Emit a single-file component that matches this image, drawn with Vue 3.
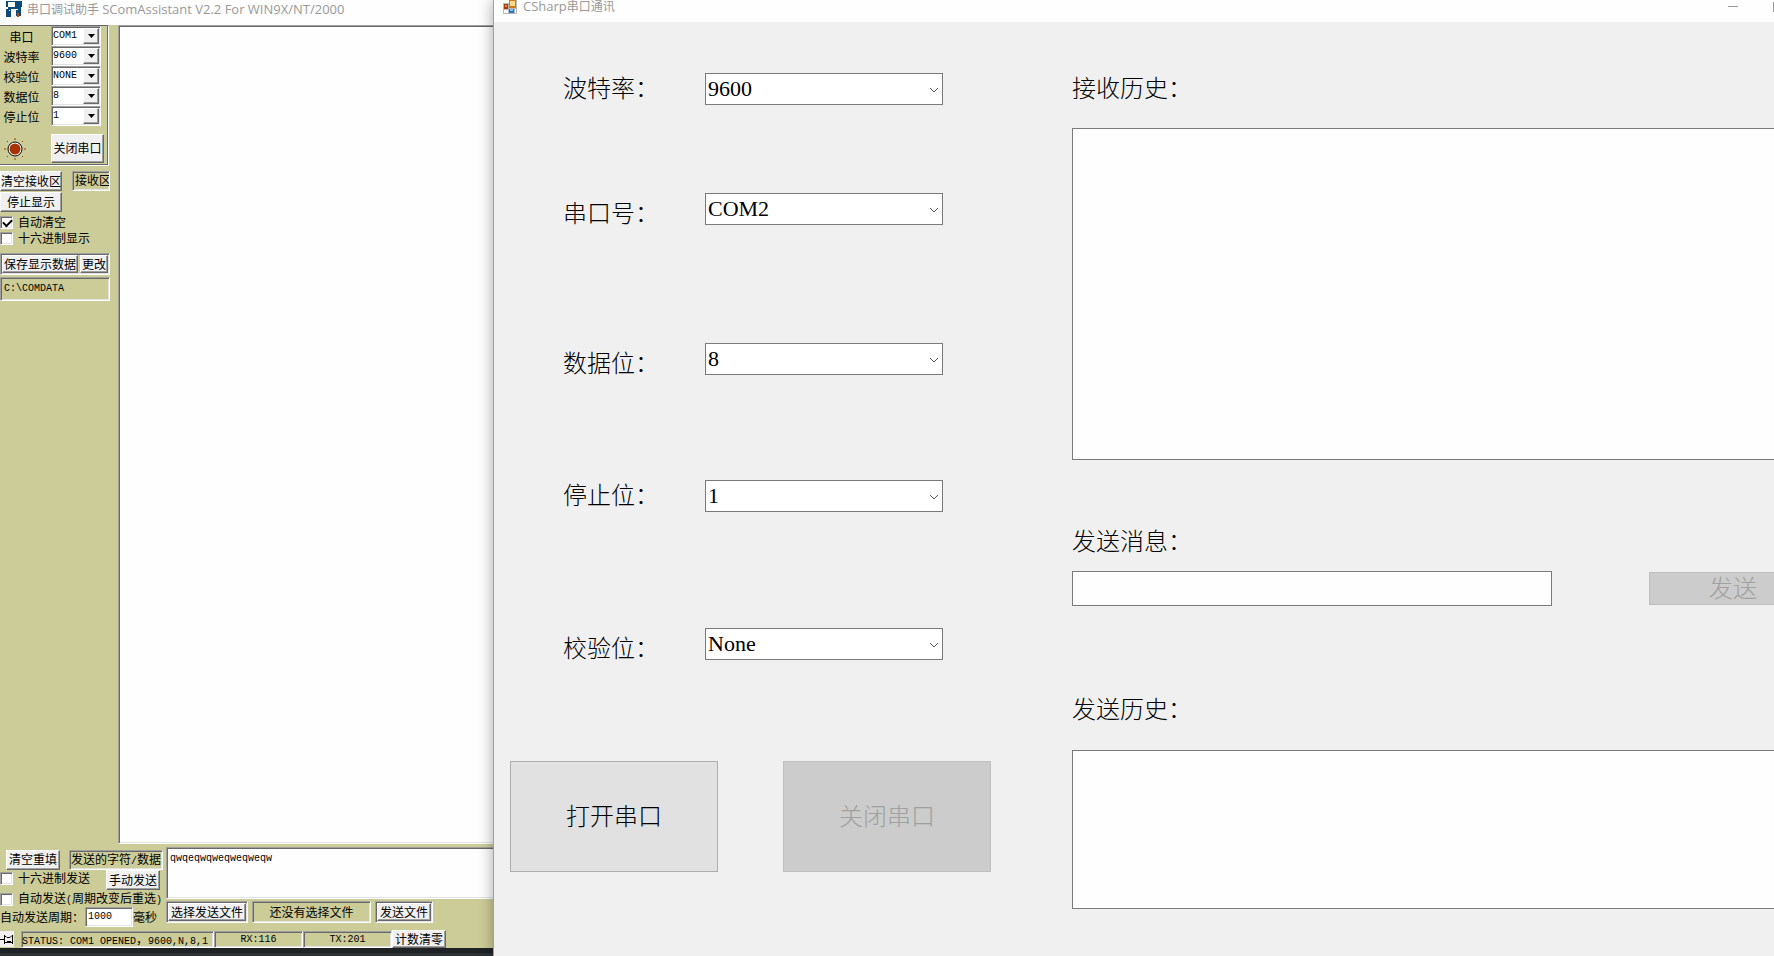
<script setup>
import { ref } from 'vue'

const portFields = [
  { id: 'port', label: '串口', value: 'COM1' },
  { id: 'baud', label: '波特率', value: '9600' },
  { id: 'parity', label: '校验位', value: 'NONE' },
  { id: 'data', label: '数据位', value: '8' },
  { id: 'stop', label: '停止位', value: '1' },
]

const formFields = [
  { id: 'cs-baud', label: '波特率：', value: '9600', low: false },
  { id: 'cs-port', label: '串口号：', value: 'COM2', low: true },
  { id: 'cs-data', label: '数据位：', value: '8', low: true },
  { id: 'cs-stop', label: '停止位：', value: '1', low: false },
  { id: 'cs-parity', label: '校验位：', value: 'None', low: true },
]

const received = ref('')
const outgoing = ref('qwqeqwqweqweqweqw')
const period = ref('1000')
const autoClear = ref(true)
const hexShow = ref(false)
const hexSend = ref(false)
const autoSend = ref(false)
const history = ref('')
const message = ref('')
const sentHistory = ref('')
</script>

<template>
  <div class="desktop">
    <section class="assistant">
      <header class="title">
        <svg class="title-icon" width="16" height="16" viewBox="0 0 16 16" aria-hidden="true">
          <path fill="#0c4a7c" d="M0 0h9v1H2v5h7V0h7v6h-1v9h-5V8H5v8H0V8h2V6H0z" />
          <path fill="#fff" d="M10 8h2v1h-2zM3 9h1v1H3z" />
          <path fill="#c2410c" d="M11 12h2v4h-2z" />
        </svg>
        <span>串口调试助手 <span class="latin">SComAssistant V2.2 For WIN9X/NT/2000</span></span>
      </header>

      <div class="upper">
        <aside class="side">
          <div class="port-box">
            <div v-for="f in portFields" :key="f.id" class="port-row">
              <label :for="f.id">{{ f.label }}</label>
              <div class="combo">
                <select :id="f.id" class="sunken lat">
                  <option>{{ f.value }}</option>
                </select>
                <span class="combo-btn raised">
                  <svg width="7" height="4" viewBox="0 0 7 4" aria-hidden="true"><path d="M0 0h7L3.500 4z" /></svg>
                </span>
              </div>
            </div>
            <div class="port-action">
              <svg width="24" height="24" viewBox="0 0 24 24" aria-hidden="true">
                <g stroke="#a83200" stroke-width="1">
                  <path d="M12 1v2M12 21v2M1 12h2M21 12h2M4 4l1 1M19 19l1 1M4 20l1-1M19 5l1-1" />
                </g>
                <circle cx="12" cy="12" r="7" fill="#fff" stroke="#000" />
                <circle cx="12" cy="12" r="5.500" fill="#a83200" />
              </svg>
              <button type="button" class="raised close-port">关闭串口</button>
            </div>
          </div>

          <div class="recv-row">
            <button type="button" class="raised wide">清空接收区</button>
            <span class="sunken tag">接收区</span>
          </div>
          <button type="button" class="raised wide">停止显示</button>
          <label class="check first"><input v-model="autoClear" type="checkbox" class="sunken" />自动清空</label>
          <label class="check"><input v-model="hexShow" type="checkbox" class="sunken" />十六进制显示</label>
          <div class="sunken save-row">
            <button type="button" class="raised save">保存显示数据</button>
            <button type="button" class="raised change">更改</button>
          </div>
          <input class="sunken path lat" type="text" value="C:\COMDATA" aria-label="保存路径" />
        </aside>
        <textarea v-model="received" class="sunken receive" aria-label="接收区"></textarea>
      </div>

      <div class="lower">
        <div class="send-left">
          <div class="line head">
            <button type="button" class="raised short">清空重填</button>
            <span class="sunken chars">发送的字符<span class="lat">/</span>数据</span>
          </div>
          <div class="line between">
            <label class="check"><input v-model="hexSend" type="checkbox" class="sunken" />十六进制发送</label>
            <button type="button" class="raised short">手动发送</button>
          </div>
          <label class="check"><input v-model="autoSend" type="checkbox" class="sunken" /><span>自动发送<span class="lat">(</span>周期改变后重选<span class="lat">)</span></span></label>
          <div class="line last">
            <label for="period" class="period-label">自动发送周期：</label>
            <input id="period" v-model="period" class="sunken lat period" type="text" />
            <span>毫秒</span>
          </div>
        </div>
        <div class="send-right">
          <textarea v-model="outgoing" class="sunken lat outgoing" aria-label="发送的字符/数据"></textarea>
          <div class="files">
            <div class="sunken frame"><button type="button" class="raised pick">选择发送文件</button></div>
            <output class="sunken chosen">还没有选择文件</output>
            <div class="sunken frame"><button type="button" class="raised short">发送文件</button></div>
          </div>
        </div>
      </div>

      <footer class="status">
        <button type="button" class="pin" aria-label="置顶">
          <svg width="14" height="14" viewBox="0 0 14 14" fill="none" stroke="#000" aria-hidden="true">
            <path d="M0 7.500h5M4.500 3v9M5 4.500h1l1 1h3l2-2M5 10.500h7M7 9.500h4M12.500 3v9" />
          </svg>
        </button>
        <span class="sunken cell state"><span class="lat">STATUS: COM1 OPENED</span>，<span class="lat">9600,N,8,1</span></span>
        <span class="sunken cell count lat">RX:116</span>
        <span class="sunken cell count lat">TX:201</span>
        <button type="button" class="raised short reset">计数清零</button>
      </footer>
      <div class="taskbar"></div>
    </section>

    <section class="csharp">
      <header class="title cs-title">
        <svg class="title-icon" width="14" height="14" viewBox="0 0 14 14" aria-hidden="true">
          <path fill="#b8b8b8" d="M0 3h6V0h8v14H0z" />
          <path fill="#fff" d="M1 10h4v3H1zM12 9h1v4h-1z" />
          <path fill="#a43a10" d="M1 4h4v5H1z" />
          <path fill="#e8843a" d="M2 5h2v2H2z" />
          <path fill="#d07a10" d="M6 0h7v8H6z" />
          <path fill="#ffd98a" d="M7 1h5v5H7z" />
          <path fill="#1f78cc" d="M6 9h5v4H6z" />
          <path fill="#7cc0f4" d="M7 9h3v2H7z" />
        </svg>
        <span><span class="latin">CSharp</span>串口通讯</span>
        <span class="window-buttons">
          <button type="button" class="min" aria-label="最小化"></button>
          <button type="button" class="max" aria-label="最大化"></button>
        </span>
      </header>
      <div class="cs-body">
        <form class="settings" @submit.prevent>
          <div class="rows">
            <div v-for="f in formFields" :key="f.id" class="field">
              <label :for="f.id" :class="{ low: f.low }">{{ f.label }}</label>
              <div class="picker">
                <select :id="f.id">
                  <option>{{ f.value }}</option>
                </select>
                <svg width="10" height="6" viewBox="0 0 10 6" fill="none" stroke="#555" aria-hidden="true"><path d="M1 1l4 4 4-4" /></svg>
              </div>
            </div>
          </div>
          <div class="actions">
            <button type="button">打开串口</button>
            <button type="button" disabled>关闭串口</button>
          </div>
        </form>
        <div class="traffic">
          <label for="history">接收历史：</label>
          <textarea id="history" v-model="history" class="history"></textarea>
          <label for="message">发送消息：</label>
          <div class="message">
            <input id="message" v-model="message" type="text" />
            <button type="button" disabled>发送</button>
          </div>
          <label for="sent">发送历史：</label>
          <textarea id="sent" v-model="sentHistory" class="sent"></textarea>
        </div>
      </div>
    </section>
  </div>
</template>

<style>
body {
  margin: 0;
  overflow: hidden;
}
</style>

<style scoped>
.desktop,
.desktop * {
  box-sizing: border-box;
}
.desktop {
  display: flex;
  min-height: 100vh;
  overflow: hidden;
  color: #000;
  font-family: "Noto Sans CJK SC", sans-serif;
}
button,
input,
select,
textarea {
  margin: 0;
  padding: 0;
  border-radius: 0;
  color: inherit;
  font: inherit;
  outline: 0;
}
select,
input[type="checkbox"] {
  appearance: none;
}
textarea {
  display: block;
  resize: none;
  overflow: hidden;
}
.title {
  display: flex;
  align-items: center;
  background: #fefefe;
  color: #999;
  font: 12px/14px "Open Sans", "Noto Sans CJK SC", sans-serif;
  white-space: nowrap;
}
.title .latin {
  font-size: 13px;
}
.title-icon {
  flex: none;
}

/* Serial assistant window */
.assistant {
  display: flex;
  flex: 0 0 493px;
  flex-direction: column;
  overflow: hidden;
  background: #cccc99;
  font-size: 12px;
  line-height: 16px;
  white-space: nowrap;
}
.assistant .title {
  height: 25px;
  padding: 0 6px 7px;
  gap: 5px;
}
.assistant .lat {
  font-family: "Liberation Mono", monospace;
  font-size: 10px;
}
.sunken {
  border: 1px solid;
  border-color: #a0a0a0 #fff #fff #a0a0a0;
  box-shadow: inset 1px 1px 0 #696969, inset -1px -1px 0 #e3e3e3;
}
.raised {
  border: 1px solid;
  border-color: #fff #696969 #696969 #fff;
  box-shadow: inset -1px -1px 0 #a0a0a0;
  background: #f0f0f0;
  overflow: hidden;
  line-height: 16px;
}
.assistant button {
  display: flex;
  align-items: center;
  justify-content: center;
  padding-bottom: 1px;
}
.upper {
  display: flex;
  flex: 1;
}
.side {
  flex: 0 0 118px;
}
.port-box {
  width: 109px;
  height: 141px;
  border: 1px solid;
  border-color: #696969 #fff #fff transparent;
  border-left: 0;
  box-shadow: inset -1px -1px 0 #696969;
}
.port-row {
  display: flex;
  height: 20px;
}
.port-row label {
  width: 51px;
  padding-right: 8px;
  text-align: center;
  line-height: 22px;
}
.combo {
  position: relative;
  width: 50px;
}
.combo select {
  width: 100%;
  height: 20px;
  padding: 0 18px 0 1px;
  background: #fff;
  display: block;
}
.combo-btn {
  position: absolute;
  top: 2px;
  right: 2px;
  bottom: 2px;
  width: 16px;
  display: flex;
  align-items: center;
  justify-content: center;
  pointer-events: none;
}
.port-action {
  display: flex;
  align-items: center;
  gap: 24px;
  padding: 8px 0 0 3px;
}
.close-port {
  width: 53px;
  height: 29px;
}
.recv-row {
  display: flex;
  gap: 10px;
  padding-top: 5px;
  margin-bottom: 1px;
}
.wide {
  width: 62px;
  height: 20px;
}
.tag {
  width: 38px;
  height: 20px;
  padding-left: 2px;
  overflow: hidden;
}
.check {
  display: flex;
  align-items: center;
  gap: 5px;
  height: 16px;
}
.check.first {
  margin-top: 2px;
}
.check input {
  position: relative;
  width: 13px;
  height: 13px;
  background: #fff;
}
.check input:checked::after {
  content: "";
  position: absolute;
  left: 2px;
  top: 2px;
  width: 7px;
  height: 4px;
  border: solid #000;
  border-width: 0 0 2px 2px;
  transform: rotate(-45deg);
}
.save-row {
  display: flex;
  gap: 2px;
  width: 110px;
  height: 22px;
  padding: 1px;
  margin: 7px 0 2px;
}
.save {
  width: 76px;
}
.change {
  flex: 1;
}
.path {
  display: block;
  width: 110px;
  height: 24px;
  padding: 0 2px 2px 3px;
  background: transparent;
}
.receive {
  flex: 1;
  margin-right: -2px;
  background: #fefefe;
}
.lower {
  display: flex;
  padding-top: 3px;
  height: 86px;
}
.send-left {
  flex: 0 0 166px;
  padding-top: 2px;
}
.line {
  display: flex;
  align-items: center;
  height: 21px;
}
.last {
  height: 19px;
}
.head {
  gap: 9px;
  padding-left: 6px;
}
.short {
  width: 54px;
  height: 20px;
}
.chars {
  width: 94px;
  height: 20px;
  padding-left: 1px;
}
.between {
  justify-content: space-between;
  align-items: flex-start;
  padding-right: 6px;
}
.period-label {
  width: 85px;
}
.period {
  width: 48px;
  height: 20px;
  padding: 0 2px;
  background: #fff;
}
.send-right {
  display: flex;
  flex: 1;
  flex-direction: column;
  gap: 2px;
  margin-right: -2px;
}
.outgoing {
  width: 100%;
  height: 52px;
  padding: 3px;
  background: #fefefe;
  line-height: 16px;
}
.files {
  display: flex;
  gap: 4px;
}
.frame {
  height: 22px;
  padding: 1px;
}
.frame button {
  height: 18px;
}
.pick {
  width: 78px;
}
.chosen {
  width: 119px;
  height: 22px;
  line-height: 20px;
  text-align: center;
}
.status {
  display: flex;
  align-items: center;
  height: 18px;
}
.pin {
  width: 14px;
  height: 16px;
  margin-right: 7px;
  border: 0;
  background: #f0f0f0;
}
.cell {
  height: 17px;
  line-height: 14px;
  overflow: hidden;
}
.state {
  width: 193px;
}
.count {
  width: 89px;
  line-height: 16px;
  text-align: center;
}
.reset {
  height: 18px;
}
.taskbar {
  height: 8px;
  background: #1f2326;
  border-bottom: 3px solid #2c3033;
}

/* CSharp window */
.csharp {
  position: relative;
  flex: 1;
  min-width: 0;
  display: flex;
  flex-direction: column;
  overflow: hidden;
  background: #f0f0f0;
  border-left: 1px solid #a0a0a0;
  box-shadow: 0 0 14px rgba(0, 0, 0, 0.35);
  font-size: 24px;
  line-height: 24px;
  font-weight: 300;
}
.cs-title {
  height: 22px;
  padding: 0 0 9px 9px;
  gap: 6px;
}
.window-buttons {
  display: flex;
  align-items: center;
  gap: 35px;
  margin-left: auto;
}
.min {
  width: 10px;
  height: 1px;
  border: 0;
  background: #999;
}
.max {
  width: 10px;
  height: 10px;
  margin-right: -9px;
  border: 1px solid #999;
  background: transparent;
}
.cs-body {
  display: grid;
  grid-template-columns: 578px 1fr;
}
.rows {
  display: grid;
  grid-template-rows: 120px 150px 137px 148px 133px;
  padding: 51px 0 0 69px;
}
.field {
  display: flex;
  height: 32px;
}
.field label {
  width: 142px;
  margin-bottom: 4px;
  align-self: center;
}
.field .low {
  margin-bottom: 1px;
  align-self: flex-end;
}
.picker {
  position: relative;
  width: 238px;
}
.picker select {
  width: 100%;
  height: 32px;
  padding-left: 2px;
  border: 1px solid #7a7a7a;
  background: #fff;
  font: 22px/28px "Liberation Serif", serif;
}
.picker svg {
  position: absolute;
  right: 4px;
  top: 14px;
  pointer-events: none;
}
.actions {
  display: flex;
  gap: 65px;
  padding-left: 16px;
}
.csharp .actions button,
.message button {
  padding-bottom: 3px;
  border: 1px solid #adadad;
  background: #e1e1e1;
}
.csharp .actions button {
  width: 208px;
  height: 111px;
}
.csharp .actions button:disabled,
.message button:disabled {
  border-color: #bfbfbf;
  background: #cbcccb;
  color: #a0a0a0;
}
.traffic {
  display: flex;
  flex-direction: column;
  padding-top: 53px;
  margin-right: -43px;
}
.traffic textarea,
.message input {
  border: 1px solid #7a7a7a;
  background: #fefefe;
}
.history {
  height: 332px;
  margin: 29px 0 68px;
}
.message {
  display: flex;
  align-items: center;
  gap: 97px;
  margin: 19px 0 90px;
}
.message input {
  flex: 1;
  min-width: 0;
  height: 35px;
}
.message button {
  width: 168px;
  height: 33px;
}
.sent {
  height: 159px;
  margin-top: 30px;
}
</style>
